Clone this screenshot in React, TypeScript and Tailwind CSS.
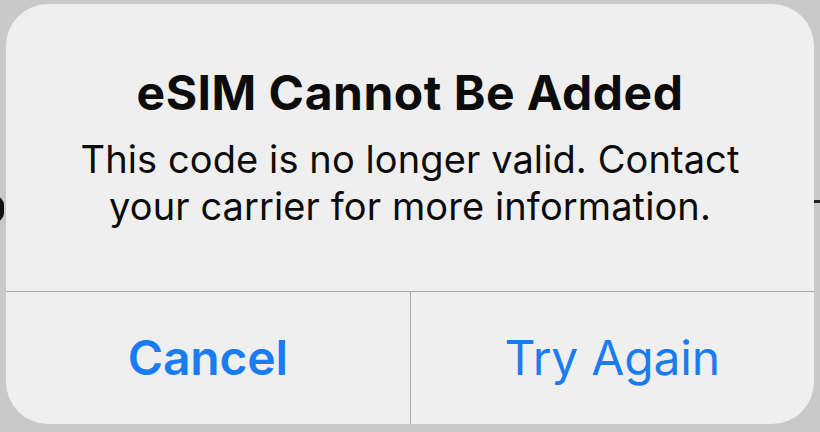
import React from "react";

function AlertButton({ label, bold }: { label: string; bold?: boolean }) {
  return (
    <button
      className={`flex-1 flex items-center justify-center text-[48px] text-[#1a7cf2] tracking-[-0.2px] ${
        bold ? "font-semibold" : "font-normal"
      }`}
    >
      {label}
    </button>
  );
}

export default function App() {
  return (
    <div
      className="relative w-[820px] h-[432px] bg-[#c9c9c9] pt-[4px] px-[6px] overflow-hidden"
      style={{ fontFamily: "Inter, 'Noto Sans', sans-serif" }}
    >
      {/* bits of the screen behind the alert */}
      <div className="absolute left-[-14px] top-[196px] w-[18px] h-[26px] rounded-full bg-[#111]" />
      <div className="absolute right-[0px] top-[200px] w-[6px] h-[3px] bg-[#222]" />

      <div className="relative h-[420px] rounded-[42px] bg-[#efefef] flex flex-col overflow-hidden">
        <div className="h-[287px] flex flex-col items-center pt-[61px] text-[#0c0c0c]">
          <h1 className="text-[48px] font-bold leading-[56px] tracking-[0.5px]">
            eSIM Cannot Be Added
          </h1>
          <p className="mt-[15px] text-[38px] leading-[47px] text-center tracking-[0.1px]">
            This code is no longer valid. Contact
            <br />
            your carrier for more information.
          </p>
        </div>
        <div className="h-px bg-[#a6a6a6]" />
        <div className="flex flex-1">
          <AlertButton label="Cancel" bold />
          <div className="w-px bg-[#a6a6a6]" />
          <AlertButton label="Try Again" />
        </div>
      </div>
    </div>
  );
}
